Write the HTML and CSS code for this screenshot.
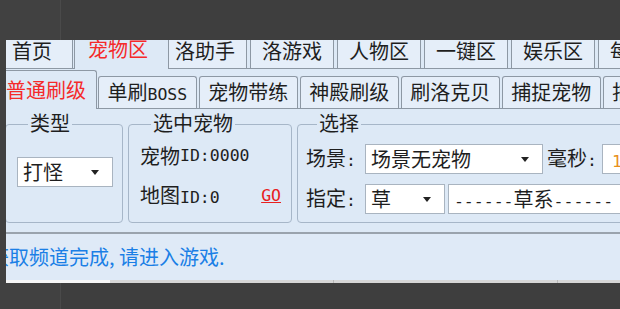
FILE: index.html
```html
<!DOCTYPE html>
<html lang="zh-CN">
<head>
  <meta charset="UTF-8">
  <title>宠物区</title>
  <link rel="stylesheet" href="styles.css">
</head>
<body>
  <div class="window">
    <div class="top-tabs">
      <div class="tab">首页</div>
      <div class="tab active">宠物区</div>
      <div class="tab">洛助手</div>
      <div class="tab">洛游戏</div>
      <div class="tab">人物区</div>
      <div class="tab">一键区</div>
      <div class="tab">娱乐区</div>
      <div class="tab">每日区</div>
    </div>

    <div class="sub-tabs">
      <div class="sub-tab active">普通刷级</div>
      <div class="sub-tab">单刷<span class="en">BOSS</span></div>
      <div class="sub-tab">宠物带练</div>
      <div class="sub-tab">神殿刷级</div>
      <div class="sub-tab">刷洛克贝</div>
      <div class="sub-tab">捕捉宠物</div>
      <div class="sub-tab">捕捉精灵</div>
    </div>

    <div class="page">
      <fieldset class="group group-type">
        <legend>类型</legend>
        <div class="combo combo-type"><span>打怪</span><i class="arrow"></i></div>
      </fieldset>

      <fieldset class="group group-pet">
        <legend>选中宠物</legend>
        <div class="row">宠物<span class="en">ID:0000</span></div>
        <div class="row split">
          <span>地图<span class="en">ID:0</span></span>
          <a class="go en">GO</a>
        </div>
      </fieldset>

      <fieldset class="group group-pick">
        <legend>选择</legend>
        <div class="row">
          <span class="label">场景<span class="en">:</span></span>
          <div class="combo combo-scene"><span>场景无宠物</span><i class="arrow"></i></div>
          <span class="label ms">毫秒<span class="en">:</span></span>
          <div class="field field-ms"><span class="en">1000</span></div>
        </div>
        <div class="row">
          <span class="label">指定<span class="en">:</span></span>
          <div class="combo combo-kind"><span>草</span><i class="arrow"></i></div>
          <div class="field field-kind"><span class="en">------</span>草系<span class="en">------</span></div>
        </div>
      </fieldset>
    </div>

    <div class="status">获取频道完成, 请进入游戏.</div>
    <div class="strip">
      <div class="strip-cell first"></div>
      <div class="strip-cell"></div>
      <div class="strip-cell"></div>
    </div>
  </div>
</body>
</html>
```

FILE: styles.css
```css
* {
  box-sizing: border-box;
}
body {
  margin: 0;
  width: 620px;
  height: 309px;
  overflow: hidden;
  background: linear-gradient(to right, #414141 60px, #4a4a4a 60px, #4a4a4a 61px, #3e3e3e 61px);
  font-family: "Noto Sans CJK SC", sans-serif;
  font-size: 20px;
  color: #1e1e1e;
}
.en {
  font-family: "DejaVu Sans Mono", monospace;
  font-size: 16.5px;
}
.window {
  margin: 40px 0 0 6px;
  width: 700px;
  height: 243px;
  background: #dde9f6;
  overflow: hidden;
}

/* top level tabs */
.top-tabs {
  display: flex;
  align-items: flex-end;
  gap: 3px;
  height: 39px;
  margin: -10px 0 0 -15px;
  border-bottom: 1px solid #8d98a4;
}
.tab {
  flex: none;
  min-width: 82px;
  height: 36px;
  padding: 5px 11px 0;
  line-height: 26px;
  text-align: center;
  background: #e5eef9;
  border: 1px solid #8d98a4;
  border-bottom: none;
}
.tab.active {
  position: relative;
  height: 39px;
  margin: 0 -9px -1px -2px;
  padding: 5px 20px 0 13px;
  color: #f52a2a;
  background: #dde9f6;
}

/* second level tabs */
.sub-tabs {
  display: flex;
  align-items: flex-end;
  gap: 2px;
  height: 39px;
  margin: 1px 0 0 -9px;
  border-bottom: 1px solid #8d98a4;
}
.sub-tab {
  flex: none;
  height: 32px;
  padding: 0 8.5px;
  line-height: 30px;
  background: #e5eef9;
  border: 1px solid #8d98a4;
  border-bottom: none;
  border-radius: 3px 3px 0 0;
}
.sub-tab.active {
  position: relative;
  height: 39px;
  margin: 0 -1px -1px -2px;
  padding: 4px 10px 0;
  color: #f52a2a;
  background: #dde9f6;
}

/* page with group boxes */
.page {
  display: flex;
  gap: 5px;
  height: 125px;
  margin-left: -1px;
  padding: 3px 0 9px;
  border-bottom: 2px solid #9aa3ad;
}
.group {
  margin: 0;
  padding: 0;
  min-width: 0;
  border: 1px solid #a6b6c8;
  border-radius: 4px;
}
.group legend {
  margin-left: 11px;
  padding: 0 2px 3px;
  line-height: 22px;
}
.group-type {
  width: 118px;
  padding: 20px 0 0 11px;
}
.group-pet {
  width: 164px;
  padding: 4px 10px 0 11px;
}
.group-pick {
  flex: 1;
  padding: 7px 0 0 8px;
}
.row {
  display: flex;
  align-items: center;
  height: 30px;
  line-height: 30px;
  white-space: nowrap;
}
.row + .row {
  margin-top: 10px;
}
.row.split {
  justify-content: space-between;
}
.go {
  color: #e82020;
  text-decoration: underline;
}

.combo {
  display: flex;
  align-items: center;
  justify-content: space-between;
  height: 30px;
  padding: 0 13px 0 5px;
  line-height: 28px;
  background: #fff;
  border: 1px solid #a9b4c0;
}
.combo-type {
  width: 96px;
}
.combo-scene {
  width: 178px;
  margin-left: 9px;
}
.combo-kind {
  width: 80px;
  margin-left: 9px;
}
.arrow {
  width: 0;
  height: 0;
  border-left: 4.5px solid transparent;
  border-right: 4.5px solid transparent;
  border-top: 5px solid #222;
}
.label.ms {
  margin-left: 4px;
}
.field {
  height: 30px;
  padding: 0 5px;
  line-height: 28px;
  background: #fff;
  border: 1px solid #a9b4c0;
}
.field-ms {
  width: 90px;
  margin-left: 5px;
  padding-left: 9px;
  color: #e8901c;
}
.field-kind {
  width: 240px;
  margin-left: 3px;
}

/* status bar */
.status {
  height: 46px;
  line-height: 46px;
  text-indent: -17px;
  white-space: nowrap;
  color: #1a7fe6;
  background: #dfeaf7;
}
.strip {
  display: flex;
  height: 3px;
  background: #d6d6d6;
}
.strip-cell {
  width: 224px;
  border-right: 1px solid #b8b8b8;
}
.strip-cell.first {
  width: 104px;
  background: #f6f6f6;
  border-right: none;
}
```
